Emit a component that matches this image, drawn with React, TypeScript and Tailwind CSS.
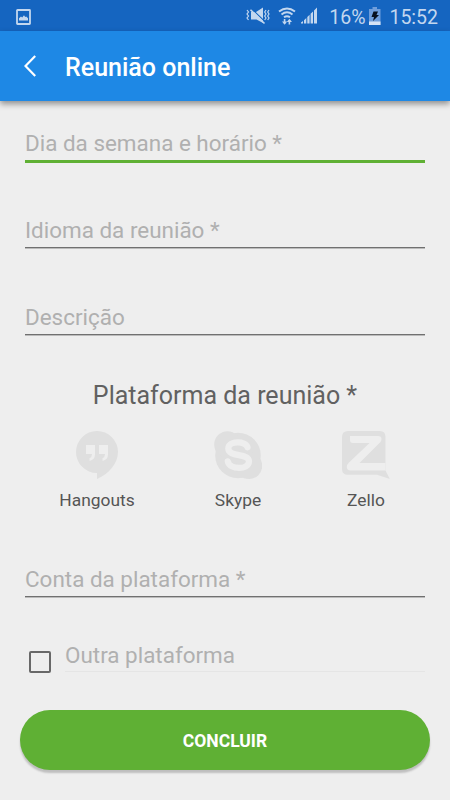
import { clsx } from 'clsx';

const StatusBar = () => (
  <div className="flex h-[31px] items-center justify-between bg-[#1565c0] pl-4 pr-3 text-[#c3d7ef]">
    <svg width="15" height="16" viewBox="0 0 15 16" className="mt-0.5">
      <rect x="1" y="1" width="13" height="14" rx="0.5" fill="none" stroke="currentColor" strokeWidth="1.8" />
      <path d="M3 11.5V9.3L5 7.5L6.2 8.5L8 6.3L9.2 8L10.2 7.4L12 9.3V11.5Z" fill="currentColor" />
    </svg>
    <div className="flex items-center">
      <svg width="24" height="18" viewBox="0 0 24 18" fill="currentColor">
        <path d="M5 5H10L17 0.5V16L10.5 12.5H5Z" />
        <path d="M5.5 1.7L19.5 15.2" stroke="#1565c0" strokeWidth="1.1" />
        <path d="M4.5 2.8L18.5 16.5" stroke="currentColor" strokeWidth="1.6" />
        <path d="M1 3L2.5 5L1 7L2.5 9L1 11L2.5 13M20 3L18.7 5L20 7L18.7 9L20 11L18.7 13M23 3L21.7 5L23 7L21.7 9L23 11L21.7 13" fill="none" stroke="currentColor" strokeWidth="1.2" />
      </svg>
      <svg width="18" height="18" viewBox="0 0 18 18" className="ml-2" fill="none" stroke="currentColor" strokeWidth="1.9">
        <path d="M1 4.5Q9 -1.7 17 4.5M3.5 7.5Q9 3.2 14.5 7.5M6 10.3Q9 8 12 10.3" />
        <path d="M6.6 12V16.5M11.4 17.5V13" strokeWidth="1.6" />
        <path d="M4 14.6H9.2L6.6 17.8ZM8.8 15H14L11.4 11.8Z" fill="currentColor" stroke="none" />
      </svg>
      <svg width="18" height="17" viewBox="0 0 18 17" className="ml-1" fill="currentColor">
        <path d="M1 16.5V15.5L3 14V16.5ZM4 16.5V13.2L6.3 11V16.5ZM7.3 16.5V10L9.6 7.7V16.5ZM10.6 16.5V6.8L13 4.5V16.5ZM14 16.5V3.5L17 0.5V16.5Z" />
      </svg>
      <span className="ml-[11px] mt-1 text-[19.5px] leading-[25px]">16%</span>
      <svg width="12" height="18" viewBox="0 0 12 18" className="ml-1">
        <path d="M3.5 0H8V2H11.5V18H0V2H3.5Z" fill="#6f9edb" />
        <path d="M0 14.5H11.5V18H0Z" fill="#d5e3f5" />
        <path d="M4.5 4.5H9L7.5 8H10L4 14L5 10H2.5Z" fill="#07111f" />
      </svg>
      <span className="ml-2 mt-1 text-[19.5px] leading-[25px]">15:52</span>
    </div>
  </div>
);

const HangoutsIcon = () => (
  <svg width="42" height="48" viewBox="0 0 42 48">
    <path d="M21 0A21 21 0 0 1 42 21C42 32 33 43 21 48V42A21 21 0 0 1 21 0Z" fill="#dfdfdf" />
    <path d="M10 14H19V23.5Q19 28.5 13.5 30V27.2Q16 26.3 16 23H10ZM23 14H32V23.5Q32 28.5 26.5 30V27.2Q29 26.3 29 23H23Z" fill="#eee" />
  </svg>
);

const SkypeIcon = () => (
  <svg width="48" height="48" viewBox="0 0 48 48">
    <circle cx="24" cy="24.5" r="22.8" fill="#dfdfdf" />
    <circle cx="13.5" cy="13.5" r="13.3" fill="#dfdfdf" />
    <circle cx="35" cy="34.8" r="13.2" fill="#dfdfdf" />
    <path d="M33.5 16.3C32 9.8 14.3 9.5 14.3 17.5C14.3 26.5 35 21.8 35 30.3C35 39.3 15.5 39 13.8 30.3" fill="none" stroke="#eee" strokeWidth="6.2" strokeLinecap="round" />
  </svg>
);

const ZelloIcon = () => (
  <svg width="48" height="48" viewBox="0 0 48 48">
    <path d="M6 0H38Q43.5 0 43.5 6V39.5L47.8 48L35 43.8H6Q0 43.8 0 38V6Q0 0 6 0Z" fill="#dfdfdf" />
    <path d="M8 5H36Q39.5 5 39.5 8Q39.5 10 38 11.5L17.5 32H43.5V39.5H8Q4.5 39 4.8 35.5Q5 33.5 7 31.5L27.5 12H11Q8 12 8 9Z" fill="#eee" />
  </svg>
);

interface FieldProps {
  label: string;
  active?: boolean;
}

const Field = ({ label, active }: FieldProps) => (
  <div className="h-[87px]">
    <div className="h-[31px] text-[22.45px] leading-[29px] text-[#b0b0b0]">{label}</div>
    <div className={clsx('box-content', active ? 'h-[2.5px] bg-[#5fb034]' : 'h-px border-b border-[#bbb] bg-[#707070]')} />
  </div>
);

const platforms = [
  { name: 'Hangouts', icon: <HangoutsIcon />, className: 'w-[76px]' },
  { name: 'Skype', icon: <SkypeIcon />, className: 'ml-[65px] w-[76px]' },
  { name: 'Zello', icon: <ZelloIcon />, className: 'ml-[52px] w-[76px]' }
];

export default function App() {
  return (
    <div className="flex h-[800px] w-[450px] flex-col overflow-hidden bg-[#eee] font-['Roboto',sans-serif]">
      <StatusBar />
      <header className="flex h-[70px] shrink-0 items-center bg-[#1e88e5] pl-6 text-white shadow-[0_3px_6px_rgba(0,0,0,0.4)]">
        <svg width="12" height="22" viewBox="0 0 12 22" fill="none" stroke="currentColor" strokeWidth="2.2">
          <path d="M11.2 1L1.5 11L11.2 21" />
        </svg>
        <h1 className="ml-[29px] mt-1 text-[25px] font-medium leading-8">Reunião online</h1>
      </header>

      <main className="flex flex-col px-[25px] pt-[28px]">
        <Field label="Dia da semana e horário *" active />
        <Field label="Idioma da reunião *" />
        <Field label="Descrição" />

        <h2 className="-mt-[10px] h-[51px] text-center text-[25px] leading-[32px] text-[#616161]">Plataforma da reunião *</h2>
        <div className="flex h-[134px] pl-[34px]">
          {platforms.map((platform) => (
            <div key={platform.name} className={clsx('flex flex-col items-center', platform.className)}>
              {platform.icon}
              <span className="mt-[9px] text-[17.4px] leading-6 text-[#555]">{platform.name}</span>
            </div>
          ))}
        </div>

        <Field label="Conta da plataforma *" />
        <div className="-mt-3 flex h-[70px]">
          <div className="ml-1 mt-[11px] size-[22px] rounded-[2px] border-2 border-[#686868]" />
          <div className="ml-3.5 flex-1">
            <div className="h-[31px] text-[22.45px] leading-[30px] text-[#b0b0b0]">Outra plataforma</div>
            <div className="h-px bg-[#e5e5e5]" />
          </div>
        </div>
      </main>

      <button className="mx-5 h-[60px] shrink-0 rounded-full bg-[#5fb034] pt-0.5 text-[17.5px] font-bold text-white shadow-[0_3px_2px_rgba(0,0,0,0.2)]">CONCLUIR</button>
    </div>
  );
}
